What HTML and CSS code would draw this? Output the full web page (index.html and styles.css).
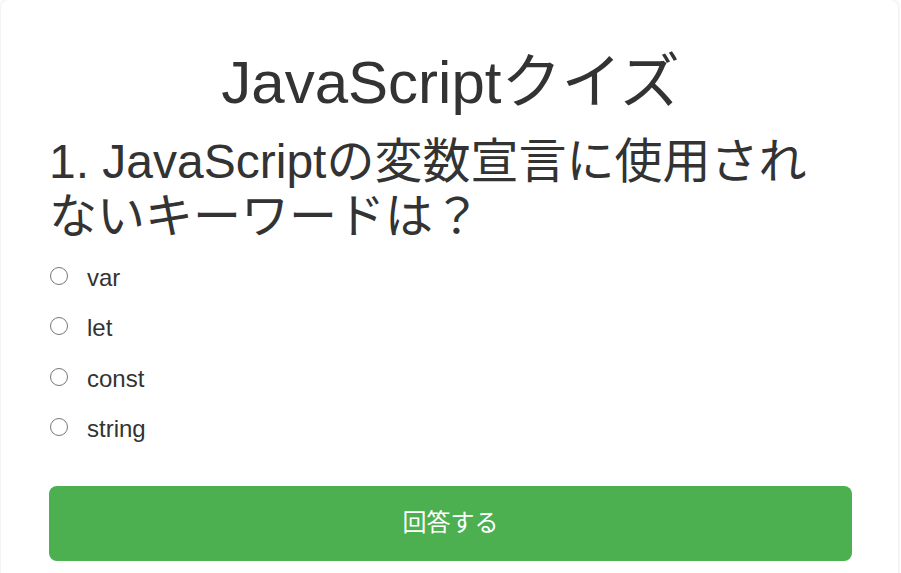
FILE: index.html
```html
<!DOCTYPE html>
<html lang="ja">
<head>
<meta charset="utf-8">
<title>JavaScriptクイズ</title>
<link rel="stylesheet" href="styles.css">
</head>
<body>
<div class="card">
  <h1 class="title">JavaScriptクイズ</h1>
  <h2 class="question">1. JavaScriptの変数宣言に使用されないキーワードは？</h2>
  <div class="options">
    <label class="option"><input type="radio" name="q1" class="radio"><span>var</span></label>
    <label class="option"><input type="radio" name="q1" class="radio"><span>let</span></label>
    <label class="option"><input type="radio" name="q1" class="radio"><span>const</span></label>
    <label class="option"><input type="radio" name="q1" class="radio"><span>string</span></label>
  </div>
  <button class="submit">回答する</button>
</div>
</body>
</html>
```
FILE: styles.css
```css
html, body {
  margin: 0;
  padding: 0;
  background: #ffffff;
}
body {
  font-family: "Liberation Sans", "Noto Sans CJK JP", sans-serif;
  color: #333333;
}
.card {
  box-sizing: border-box;
  width: 897px;
  margin-left: 1px;
  padding: 48px 46px 40px 48px;
  background: #ffffff;
  border-radius: 8px;
  box-shadow: 0 0 4px rgba(0, 0, 0, 0.12);
  display: flex;
  flex-direction: column;
}
.title {
  margin: 0;
  font-size: 60px;
  line-height: 69px;
  font-weight: normal;
  text-align: center;
}
.question {
  margin: 17px 0 0 0;
  font-size: 48px;
  line-height: 55px;
  font-weight: normal;
}
.options {
  margin-top: 20px;
  display: flex;
  flex-direction: column;
  gap: 22.8px;
}
.option {
  display: flex;
  align-items: center;
  font-size: 24px;
  line-height: 27.6px;
}
.radio {
  appearance: none;
  -webkit-appearance: none;
  box-sizing: border-box;
  width: 18px;
  height: 18px;
  margin: 0 19px 0 1px;
  border: 1.5px solid #777777;
  border-radius: 50%;
  background: #ffffff;
  position: relative;
  top: -2px;
}
.submit {
  margin-top: 43px;
  height: 75px;
  width: 100%;
  padding: 0 0 6px 0;
  border: none;
  border-radius: 8px;
  background: #4caf50;
  color: #ffffff;
  font-family: "Liberation Sans", "Noto Sans CJK JP", sans-serif;
  font-size: 24px;
}
```
